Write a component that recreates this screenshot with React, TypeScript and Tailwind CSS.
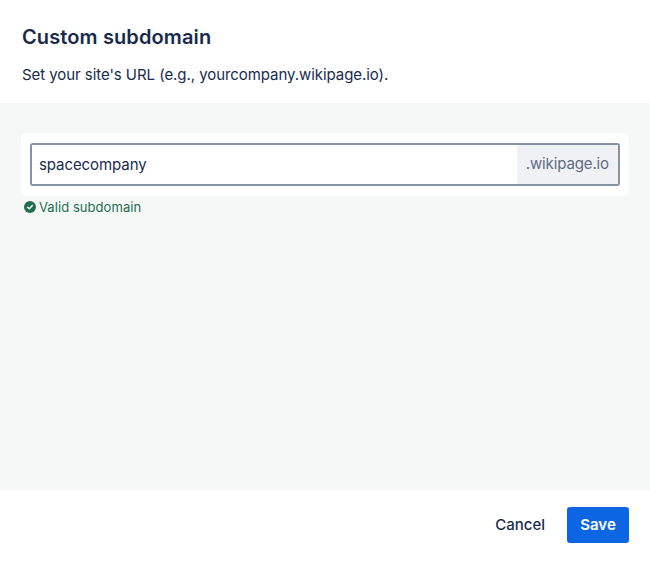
import React from 'react'

export default function App() {
  return (
    <div className="flex h-[565px] w-[650px] flex-col bg-white font-['Inter',sans-serif] text-[#172b4d]">
      {/* Header */}
      <div className="h-[103px] shrink-0 px-[22px] pt-[23px]">
        <h2 className="text-[20px] leading-[28px] font-semibold tracking-[0.12px]">Custom subdomain</h2>
        <p className="mt-[14px] text-[15px] leading-[20px] tracking-[-0.06px]">Set your site's URL (e.g., yourcompany.wikipage.io).</p>
      </div>

      {/* Body */}
      <div className="flex-1 bg-[#f6f8f8] px-[21px] pt-[30px]">
        <div className="rounded-[6px] bg-white px-[9px] py-[10px]">
          <div className="box-content flex h-[39px] overflow-hidden rounded-[3px] border-2 border-[#8592a6]">
            <input
              readOnly
              value="spacecompany"
              className="min-w-0 flex-1 bg-white pt-[2px] pl-[7px] text-[15px] tracking-[-0.08px] text-[#172b4d] outline-none"
            />
            <div className="flex items-center bg-[#eff1f4] pr-[9px] pl-[9px] text-[15px] tracking-[-0.12px] text-[#5e6b82]">.wikipage.io</div>
          </div>
        </div>
        <div className="mt-[3px] flex items-center gap-[3px] pl-[3px] text-[13px] leading-[16px] text-[#216e4e]">
          <svg width="12" height="12" viewBox="0 0 12 12" aria-hidden="true">
            <circle cx="6" cy="6" r="6" fill="#216e4e" />
            <path d="M3.6 6.2 5.3 7.8 8.4 4.5" fill="none" stroke="#fff" strokeWidth="1.4" strokeLinecap="round" strokeLinejoin="round" />
          </svg>
          <span className="tracking-[0.06px]">Valid subdomain</span>
        </div>
      </div>

      {/* Footer */}
      <div className="flex h-[75px] shrink-0 items-start justify-end gap-[22px] px-[21px] pt-[17px]">
        <button className="h-[36px] text-[15px] font-medium text-[#172b4d]">Cancel</button>
        <button className="h-[36px] w-[62px] rounded-[3px] bg-[#0c66e4] text-[15px] font-semibold text-white">Save</button>
      </div>
    </div>
  )
}
